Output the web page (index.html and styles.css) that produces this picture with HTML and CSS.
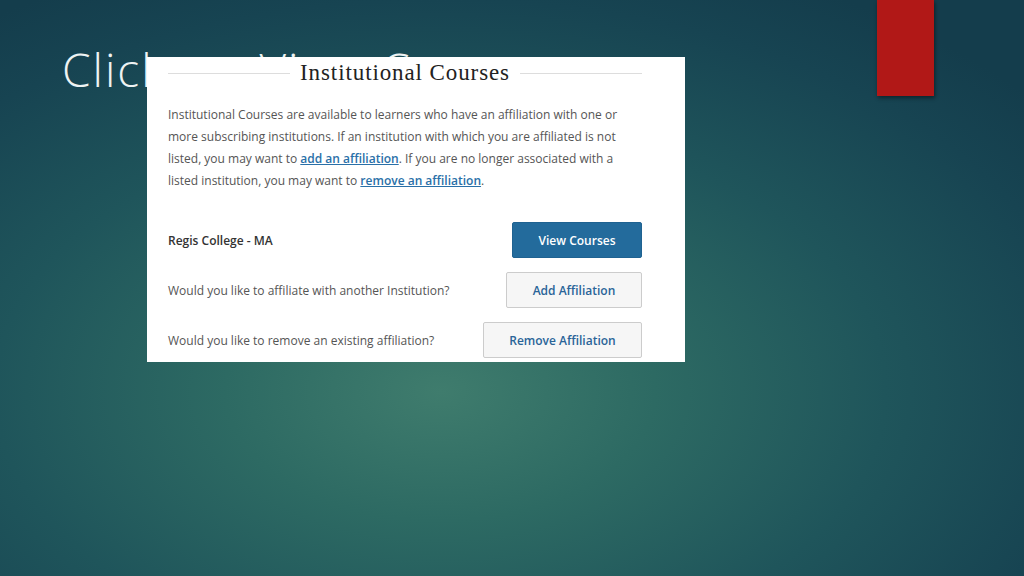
FILE: index.html
```html
<!DOCTYPE html>
<html lang="en">

<head>
    <meta charset="UTF-8">
    <meta name="viewport" content="width=device-width, initial-scale=1.0">
    <title>Click on View Courses</title>
    <link rel="stylesheet" href="styles.css">
</head>

<body>

    <div class="slide">
        <div class="accent-bar"></div>
        <h1 class="slide-title">Click on View Courses</h1>

        <div class="shot">
            <div class="shot-heading">
                <span class="rule"></span>
                <h2>Institutional Courses</h2>
                <span class="rule"></span>
            </div>

            <p class="intro">
                Institutional Courses are available to learners who have an affiliation with one or
                more subscribing institutions. If an institution with which you are affiliated is not
                listed, you may want to <a href="#">add an affiliation</a>. If you are no longer associated with a
                listed institution, you may want to <a href="#">remove an affiliation</a>.
            </p>

            <div class="shot-row first">
                <span class="org">Regis College - MA</span>
                <button class="btn btn-primary btn-view">View Courses</button>
            </div>
            <div class="shot-row">
                <span>Would you like to affiliate with another Institution?</span>
                <button class="btn btn-default btn-add">Add Affiliation</button>
            </div>
            <div class="shot-row">
                <span>Would you like to remove an existing affiliation?</span>
                <button class="btn btn-default btn-remove">Remove Affiliation</button>
            </div>
        </div>
    </div>

</body>

</html>
```

FILE: styles.css
```css
html,
body {
    margin: 0;
    padding: 0;
}

.slide {
    position: relative;
    width: 1024px;
    height: 576px;
    overflow: hidden;
    background: radial-gradient(ellipse 75% 80% at 43% 68%, #3f7c6d 0%, #2d6a63 28%, #1f555b 58%, #174452 85%, #143d4c 100%);
}

.accent-bar {
    position: absolute;
    left: 877px;
    top: 0;
    width: 57px;
    height: 96px;
    background-color: #b11817;
    box-shadow: 1px 2px 4px rgba(0, 0, 0, 0.45);
}

.slide-title {
    margin: 0;
    padding: 37px 0 0 62px;
    font-family: "Open Sans", "Liberation Sans", sans-serif;
    font-weight: 300;
    font-size: 46px;
    line-height: 64px;
    color: #eef3f3;
    letter-spacing: 2px;
    word-spacing: 4px;
}

/* screenshot panel sits over the title */
.shot {
    position: absolute;
    left: 147px;
    top: 57px;
    width: 538px;
    height: 305px;
    box-sizing: border-box;
    padding: 0 43px 0 21px;
    background-color: #fff;
    font-family: "Open Sans", "Liberation Sans", sans-serif;
    font-size: 12px;
    color: #555;
}

.shot-heading {
    display: flex;
    align-items: center;
    gap: 10px;
    height: 32px;
}

.shot-heading .rule {
    flex: 1;
    height: 1px;
    background-color: #ddd;
}

.shot-heading h2 {
    margin: 0;
    font-family: "Liberation Serif", "DejaVu Serif", serif;
    font-weight: normal;
    font-size: 23px;
    letter-spacing: 0.9px;
    color: #222;
}

.intro {
    margin: 15px 0 0;
    width: 452px;
    line-height: 22px;
}

.intro a {
    color: #2a70a8;
    font-weight: 600;
    text-decoration: underline;
}

.shot-row {
    display: flex;
    justify-content: space-between;
    align-items: center;
    height: 36px;
    margin-top: 14px;
}

.shot-row.first {
    margin-top: 30px;
}

.org {
    font-weight: 600;
    color: #333;
}

.btn {
    height: 36px;
    box-sizing: border-box;
    border-radius: 2px;
    font-family: "Open Sans", "Liberation Sans", sans-serif;
    font-size: 12px;
    font-weight: 600;
    cursor: pointer;
}

.btn-primary {
    background-color: #236b9c;
    border: 1px solid #1f6291;
    color: #fff;
}

.btn-default {
    background-color: #f6f6f6;
    border: 1px solid #ccc;
    color: #2a6498;
}

.btn-view {
    width: 130px;
}

.btn-add {
    width: 136px;
}

.btn-remove {
    width: 159px;
}
```
